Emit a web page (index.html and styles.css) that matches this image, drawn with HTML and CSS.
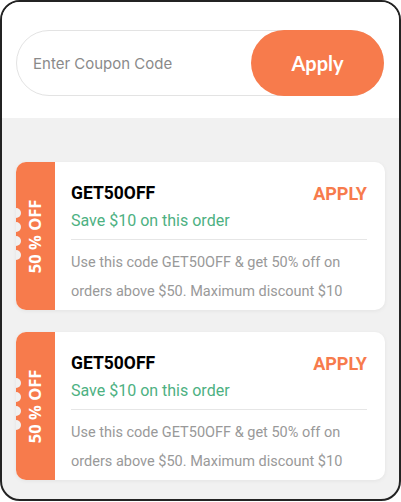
FILE: index.html
```html
<!DOCTYPE html>
<html lang="en">
<head>
    <meta charset="UTF-8">
    <title>Coupons</title>
    <link rel="stylesheet" href="styles.css">
</head>
<body>
<div class="coupon-frame">
    <div class="coupon-head">
        <form class="coupon-form">
            <input type="text" class="coupon-input" placeholder="Enter Coupon Code"/>
            <button type="button" class="coupon-submit">Apply</button>
        </form>
    </div>
    <ul class="coupon-list">
        <li class="coupon">
            <div class="coupon-stub">
                <span class="coupon-cut"></span>
                <span class="coupon-off">50 % OFF</span>
            </div>
            <div class="coupon-body">
                <div class="coupon-top">
                    <strong class="coupon-code">GET50OFF</strong>
                    <a href="#" class="coupon-apply">APPLY</a>
                </div>
                <p class="coupon-save">Save $10 on this order</p>
                <p class="coupon-desc">Use this code GET50OFF &amp; get 50% off on orders above $50. Maximum discount $10</p>
            </div>
        </li>
        <li class="coupon">
            <div class="coupon-stub">
                <span class="coupon-cut"></span>
                <span class="coupon-off">50 % OFF</span>
            </div>
            <div class="coupon-body">
                <div class="coupon-top">
                    <strong class="coupon-code">GET50OFF</strong>
                    <a href="#" class="coupon-apply">APPLY</a>
                </div>
                <p class="coupon-save">Save $10 on this order</p>
                <p class="coupon-desc">Use this code GET50OFF &amp; get 50% off on orders above $50. Maximum discount $10</p>
            </div>
        </li>
    </ul>
</div>
</body>
</html>
```

FILE: styles.css
```css
/* reset */
body,div,ul,li,p,form,input,button{margin:0;padding:0}
html,body{width:100%;height:100%;background:#fff}
body{font-family:Roboto,'Liberation Sans',sans-serif;font-size:15px;line-height:1.5;color:#000}
ul,li{list-style:none}
button{border:0 none;background-color:transparent;cursor:pointer}
a{text-decoration:none}
/* //reset */
.coupon-frame{
    box-sizing:border-box;
    width:401px;
    height:501px;
    border:2px solid #232323;
    border-radius:20px;
    overflow:hidden;
    background:#f1f1f1;
}
.coupon-head{
    height:116px;
    padding:28px 15px 0 14px;
    box-sizing:border-box;
    background:#fff;
}
.coupon-form{
    display:flex;
    height:66px;
    border:1px solid #e3e3e3;
    border-radius:33px;
    box-sizing:border-box;
}
.coupon-input{
    flex:1;
    min-width:0;
    border:0 none;
    outline:none;
    background:transparent;
    padding-left:16px;
    font-family:Inter,sans-serif;
    font-size:15px;
    color:#333;
}
.coupon-input::placeholder{
    color:#8a8a8a;
}
.coupon-submit{
    width:133px;
    height:66px;
    margin:-1px -1px -1px 0;
    border-radius:33px;
    background:#f77b4c;
    color:#fff;
    font-family:Lato,sans-serif;
    font-size:20px;
    font-weight:700;
}
.coupon-list{
    padding:44px 14px 0 14px;
}
.coupon{
    display:flex;
    height:148px;
    margin-bottom:22px;
    background:#fff;
    border-radius:10px;
    box-shadow:0 1px 4px rgba(0,0,0,0.06);
    overflow:hidden;
}
.coupon-stub{
    position:relative;
    width:39px;
    flex:none;
    background:#f77b4c;
    display:flex;
    align-items:center;
    justify-content:center;
}
.coupon-cut{
    position:absolute;
    left:-5px;
    top:46px;
    width:10px;
    height:10px;
    border-radius:50%;
    background:#f1f1f1;
    box-shadow:0 14px 0 #f1f1f1,0 28px 0 #f1f1f1,0 42px 0 #f1f1f1;
}
.coupon-off{
    transform:rotate(-90deg);
    white-space:nowrap;
    color:#fff;
    font-family:'Open Sans',sans-serif;
    font-size:16.5px;
    font-weight:700;
}
.coupon-body{
    flex:1;
    padding:18px 18px 0 16px;
}
.coupon-top{
    display:flex;
    justify-content:space-between;
    align-items:center;
    height:26px;
}
.coupon-code{
    font-size:17.5px;
    font-weight:700;
    color:#000;
}
.coupon-apply{
    font-size:18px;
    font-weight:700;
    color:#f77b4c;
}
.coupon-save{
    padding:5px 0 8px;
    border-bottom:1px solid #e6e6e6;
    color:#4db182;
    font-size:16px;
    line-height:20px;
}
.coupon-desc{
    padding-top:8px;
    color:#999;
    font-size:14.5px;
    line-height:29px;
}
```
